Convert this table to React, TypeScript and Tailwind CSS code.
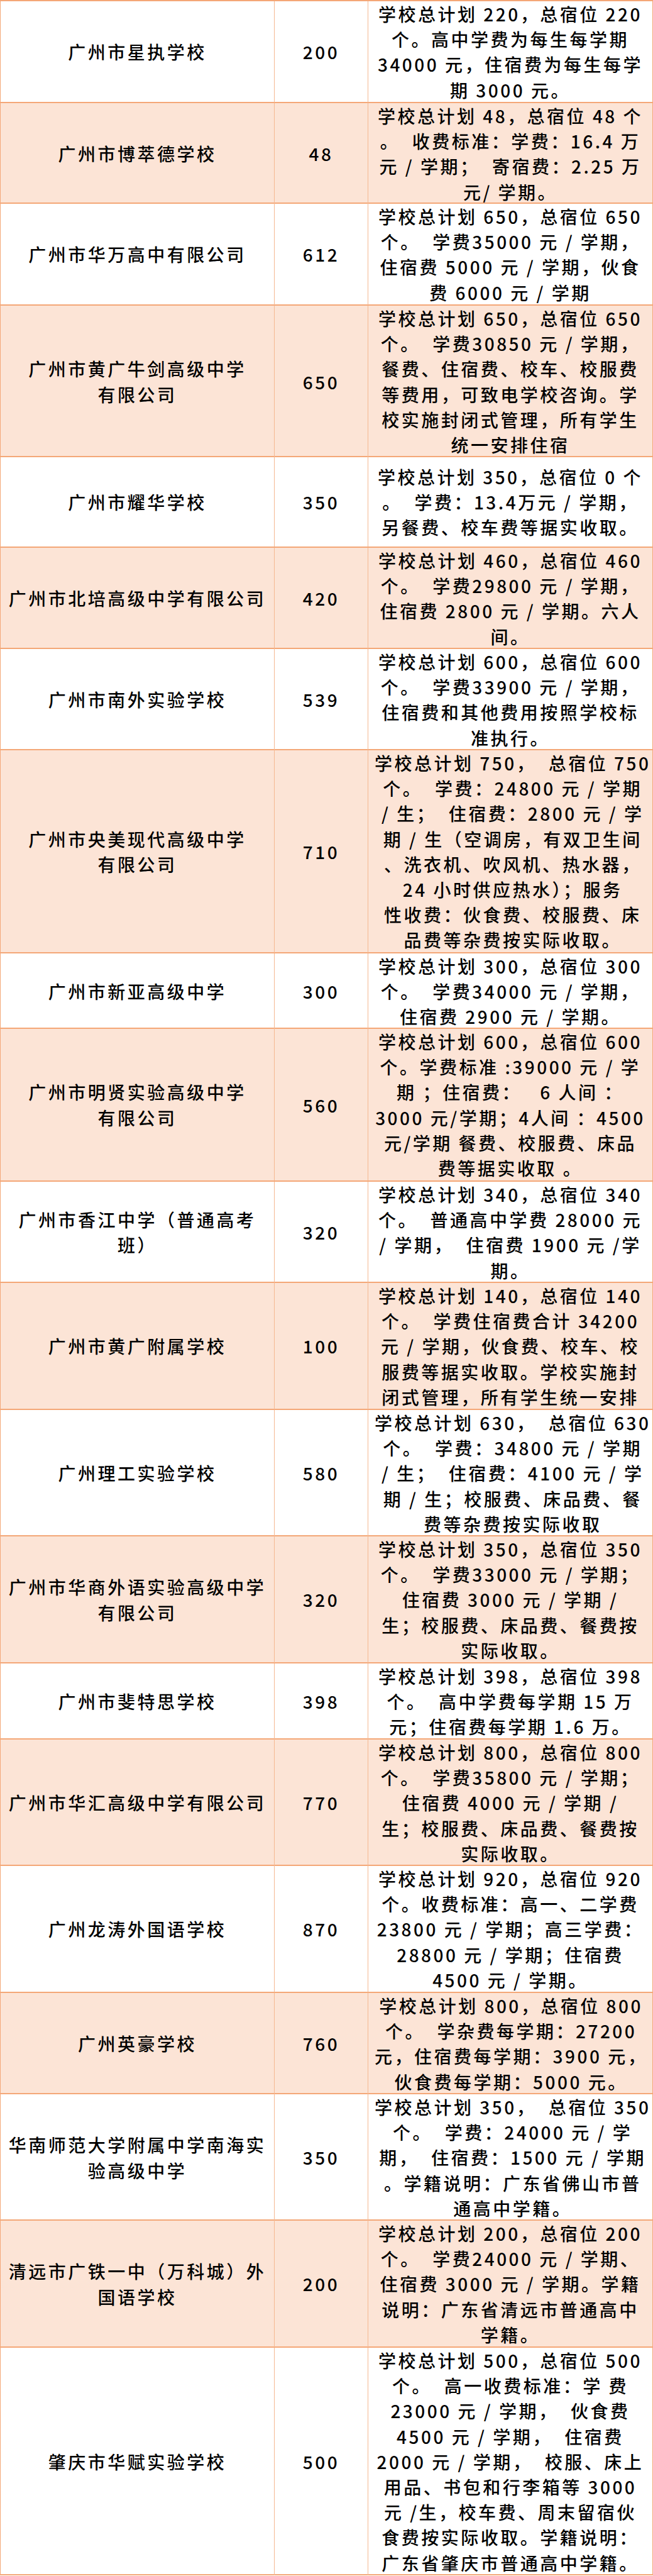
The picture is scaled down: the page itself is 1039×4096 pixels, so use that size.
type Row = { name: string[]; num: string; h: string; lines: string[] };

const rows: Row[] = [
  {
    name: ["广州市星执学校"], num: "200", h: "h-[162px]",
    lines: ["学校总计划 220，总宿位 220", "个。高中学费为每生每学期", "34000 元，住宿费为每生每学", "期 3000 元。"],
  },
  {
    name: ["广州市博萃德学校"], num: "48", h: "h-[160px]",
    lines: ["学校总计划 48，总宿位 48 个", "。  收费标准：学费：16.4 万", "元 / 学期；  寄宿费：2.25 万", "元/ 学期。"],
  },
  {
    name: ["广州市华万高中有限公司"], num: "612", h: "h-[162px]",
    lines: ["学校总计划 650，总宿位 650", "个。  学费35000 元 / 学期，", "住宿费 5000 元 / 学期，伙食", "费 6000 元 / 学期"],
  },
  {
    name: ["广州市黄广牛剑高级中学", "有限公司"], num: "650", h: "h-[241px]",
    lines: ["学校总计划 650，总宿位 650", "个。  学费30850 元 / 学期，", "餐费、住宿费、校车、校服费", "等费用，可致电学校咨询。学", "校实施封闭式管理，所有学生", "统一安排住宿"],
  },
  {
    name: ["广州市耀华学校"], num: "350", h: "h-[144px]",
    lines: ["学校总计划 350，总宿位 0 个", "。  学费：13.4万元 / 学期，", "另餐费、校车费等据实收取。"],
  },
  {
    name: ["广州市北培高级中学有限公司"], num: "420", h: "h-[161px]",
    lines: ["学校总计划 460，总宿位 460", "个。  学费29800 元 / 学期，", "住宿费 2800 元 / 学期。六人", "间。"],
  },
  {
    name: ["广州市南外实验学校"], num: "539", h: "h-[161px]",
    lines: ["学校总计划 600，总宿位 600", "个。  学费33900 元 / 学期，", "住宿费和其他费用按照学校标", "准执行。"],
  },
  {
    name: ["广州市央美现代高级中学", "有限公司"], num: "710", h: "h-[323px]",
    lines: [
      "学校总计划 750，  总宿位 750", "个。  学费：24800 元 / 学期", "/ 生；  住宿费：2800 元 / 学",
      "期 / 生（空调房，有双卫生间", "、洗衣机、吹风机、热水器，", "24 小时供应热水）；服务",
      "性收费：伙食费、校服费、床", "品费等杂费按实际收取。",
    ],
  },
  {
    name: ["广州市新亚高级中学"], num: "300", h: "h-[120px]",
    lines: ["学校总计划 300，总宿位 300", "个。  学费34000 元 / 学期，", "住宿费 2900 元 / 学期。"],
  },
  {
    name: ["广州市明贤实验高级中学", "有限公司"], num: "560", h: "h-[243px]",
    lines: ["学校总计划 600，总宿位 600", "个。学费标准 :39000 元 / 学", "期 ；住宿费：   6 人间 ：", "3000 元/学期；4人间 ：4500", "元/学期 餐费、校服费、床品", "费等据实收取 。"],
  },
  {
    name: ["广州市香江中学（普通高考", "班）"], num: "320", h: "h-[161px]",
    lines: ["学校总计划 340，总宿位 340", "个。  普通高中学费 28000 元", "/ 学期，  住宿费 1900 元 /学", "期。"],
  },
  {
    name: ["广州市黄广附属学校"], num: "100", h: "h-[202px]",
    lines: ["学校总计划 140，总宿位 140", "个。  学费住宿费合计 34200", "元 / 学期，伙食费、校车、校", "服费等据实收取。学校实施封", "闭式管理，所有学生统一安排"],
  },
  {
    name: ["广州理工实验学校"], num: "580", h: "h-[201px]",
    lines: ["学校总计划 630，  总宿位 630", "个。  学费：34800 元 / 学期", "/ 生；  住宿费：4100 元 / 学", "期 / 生；校服费、床品费、餐", "费等杂费按实际收取"],
  },
  {
    name: ["广州市华商外语实验高级中学", "有限公司"], num: "320", h: "h-[202px]",
    lines: ["学校总计划 350，总宿位 350", "个。  学费33000 元 / 学期；", "住宿费 3000 元 / 学期 /", "生；校服费、床品费、餐费按", "实际收取。"],
  },
  {
    name: ["广州市斐特思学校"], num: "398", h: "h-[121px]",
    lines: ["学校总计划 398，总宿位 398", "个。  高中学费每学期 15 万", "元；住宿费每学期 1.6 万。"],
  },
  {
    name: ["广州市华汇高级中学有限公司"], num: "770", h: "h-[201px]",
    lines: ["学校总计划 800，总宿位 800", "个。  学费35800 元 / 学期；", "住宿费 4000 元 / 学期 /", "生；校服费、床品费、餐费按", "实际收取。"],
  },
  {
    name: ["广州龙涛外国语学校"], num: "870", h: "h-[202px]",
    lines: ["学校总计划 920，总宿位 920", "个。收费标准：高一、二学费", "23800 元 / 学期；高三学费：", "28800 元 / 学期；住宿费", "4500 元 / 学期。"],
  },
  {
    name: ["广州英豪学校"], num: "760", h: "h-[161px]",
    lines: ["学校总计划 800，总宿位 800", "个。  学杂费每学期：27200", "元，住宿费每学期：3900 元，", "伙食费每学期：5000 元。"],
  },
  {
    name: ["华南师范大学附属中学南海实", "验高级中学"], num: "350", h: "h-[201px]",
    lines: ["学校总计划 350，  总宿位 350", "个。  学费：24000 元 / 学", "期，  住宿费：1500 元 / 学期", "。学籍说明：广东省佛山市普", "通高中学籍。"],
  },
  {
    name: ["清远市广铁一中（万科城）外", "国语学校"], num: "200", h: "h-[202px]",
    lines: ["学校总计划 200，总宿位 200", "个。  学费24000 元 / 学期、", "住宿费 3000 元 / 学期。学籍", "说明：广东省清远市普通高中", "学籍。"],
  },
  {
    name: ["肇庆市华赋实验学校"], num: "500", h: "h-[362px]",
    lines: [
      "学校总计划 500，总宿位 500", "个。  高一收费标准：学 费", "23000 元 / 学期，  伙食费",
      "4500 元 / 学期，  住宿费", "2000 元 / 学期，  校服、床上", "用品、书包和行李箱等 3000",
      "元 /生，校车费、周末留宿伙", "食费按实际收取。学籍说明：", "广东省肇庆市普通高中学籍。",
    ],
  },
];

export default function App() {
  return (
    <div className="w-[1039px] bg-white font-['Noto_Sans_CJK_SC','Liberation_Sans',sans-serif] text-[28px] font-medium leading-[40.2px] tracking-[3.5px] text-black">
      <div className="border-x border-t-2 border-[#F4A777]">
        {rows.map((r, i) => (
          <div
            key={i}
            className={`grid grid-cols-[436px_149px_1fr] border-b-2 border-[#F4A777] ${r.h} ${
              i % 2 ? "bg-[#FCE4D6]" : "bg-white"
            }`}
          >
            <div className="flex flex-col items-center justify-center border-r border-[#F5B891] text-center">
              {r.name.map((n, j) => (
                <div key={j} className="whitespace-pre">{n}</div>
              ))}
            </div>
            <div className="flex items-center justify-center border-r border-[#F5B891]">{r.num}</div>
            <div className="flex flex-col items-center justify-center px-[10px]">
              {r.lines.map((l, j) => (
                <div key={j} className="whitespace-pre text-center">{l}</div>
              ))}
            </div>
          </div>
        ))}
      </div>
    </div>
  );
}
